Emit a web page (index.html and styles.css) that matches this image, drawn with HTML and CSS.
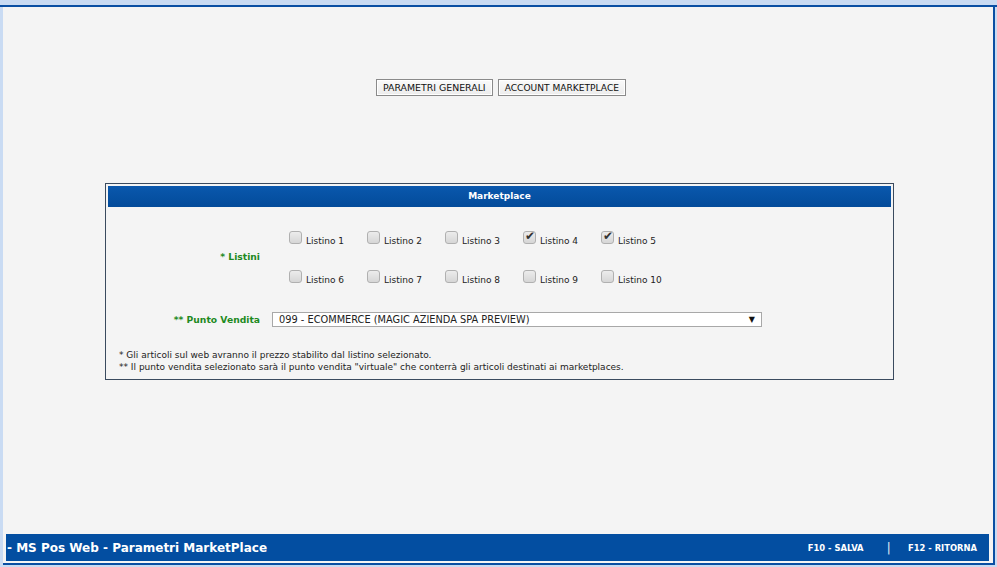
FILE: index.html
```html
<!DOCTYPE html>
<html lang="it">
<head>
    <meta charset="UTF-8">
    <title>MS Pos Web - Parametri MarketPlace</title>
    <link rel="stylesheet" href="styles.css">
</head>
<body>
    <div class="topbar"></div>
    <div class="frame">
        <div class="tabs">
            <button class="btn" type="button">PARAMETRI GENERALI</button>
            <button class="btn" type="button">ACCOUNT MARKETPLACE</button>
        </div>

        <div class="panel">
            <div class="panel-head">Marketplace</div>
            <div class="panel-body">
                <div class="row row-listini">
                    <div class="label">* Listini</div>
                    <div class="checks">
                        <label class="chk"><span class="box"></span>Listino 1</label>
                        <label class="chk"><span class="box"></span>Listino 2</label>
                        <label class="chk"><span class="box"></span>Listino 3</label>
                        <label class="chk"><span class="box on"></span>Listino 4</label>
                        <label class="chk"><span class="box on"></span>Listino 5</label>
                        <label class="chk"><span class="box"></span>Listino 6</label>
                        <label class="chk"><span class="box"></span>Listino 7</label>
                        <label class="chk"><span class="box"></span>Listino 8</label>
                        <label class="chk"><span class="box"></span>Listino 9</label>
                        <label class="chk"><span class="box"></span>Listino 10</label>
                    </div>
                </div>

                <div class="row row-pv">
                    <div class="label">** Punto Vendita</div>
                    <div class="select">
                        <span>099 - ECOMMERCE (MAGIC AZIENDA SPA PREVIEW)</span>
                        <span class="arrow">&#9660;</span>
                    </div>
                </div>

                <div class="notes">
                    <div>* Gli articoli sul web avranno il prezzo stabilito dal listino selezionato.</div>
                    <div>** Il punto vendita selezionato sarà il punto vendita "virtuale" che conterrà gli articoli destinati ai marketplaces.</div>
                </div>
            </div>
        </div>

        <div class="footer">
            <span class="title">- MS Pos Web - Parametri MarketPlace</span>
            <div class="keys">
                <span>F10 - SALVA</span>
                <span class="sep">|</span>
                <span>F12 - RITORNA</span>
            </div>
        </div>
    </div>
</body>
</html>
```

FILE: styles.css
```css
html, body {
    margin: 0;
    height: 567px;
    overflow: hidden;
}

body {
    background-color: #c9dbf3;
    font-family: "DejaVu Sans", Verdana, sans-serif;
    font-size: 10px;
    color: #222;
}

.topbar {
    height: 5px;
    border-bottom: 2px solid #0a4fa3;
}

.frame {
    margin-left: 3px;
    width: 992px;
    height: 558px;
    box-sizing: border-box;
    padding: 0 4px 2px 3px;
    background-color: #f4f4f4;
    border-right: 2px solid #0a4fa3;
    border-bottom: 2px solid #0a4fa3;
    display: flex;
    flex-direction: column;
}

.tabs {
    display: flex;
    justify-content: center;
    gap: 5px;
    margin-top: 72px;
    margin-left: 7px;
}

.btn {
    height: 17px;
    padding: 0 6px;
    font-family: "DejaVu Sans", Verdana, sans-serif;
    font-size: 9.4px;
    color: #111;
    background: linear-gradient(#fafafa, #ececec);
    border: 1px solid #8a8a8a;
    box-shadow: inset 0 0 0 1px #fff;
    border-radius: 0;
}

.btn + .btn {
    font-size: 9.1px;
}

.panel {
    margin: 87px 0 0 99px;
    width: 789px;
    height: 197px;
    box-sizing: border-box;
    border: 1px solid #3a4a5e;
    padding: 2px;
}

.panel-head {
    height: 21px;
    line-height: 21px;
    background: linear-gradient(#0a58ad, #034b9a);
    color: #fff;
    font-weight: bold;
    font-size: 9px;
    text-align: center;
}

.panel-body {
    padding-top: 25px;
}

.row {
    display: flex;
    align-items: center;
}

.label {
    width: 152px;
    text-align: right;
    color: #1e8a1e;
    font-weight: bold;
    font-size: 9.2px;
}

.row-listini .label {
    padding-bottom: 9px;
}

.row-listini .checks {
    margin-left: 29px;
    display: grid;
    grid-template-columns: repeat(5, 78px);
    row-gap: 21px;
}

.chk {
    display: flex;
    align-items: center;
    gap: 4px;
    height: 18px;
    font-size: 9px;
}

.box {
    width: 11px;
    height: 11px;
    border: 1px solid #b0b0b0;
    border-radius: 3px;
    background: linear-gradient(#ececec, #d6d6d6);
    position: relative;
    top: -4px;
    flex: none;
}

.box.on::after {
    content: "\2714";
    position: absolute;
    left: 1px;
    top: -3px;
    font-size: 12px;
    color: #333;
}

.row-pv {
    margin-top: 23px;
}

.select {
    margin-left: 12px;
    width: 490px;
    height: 15px;
    box-sizing: border-box;
    border: 1px solid #a8a8a8;
    background: #fff;
    display: flex;
    justify-content: space-between;
    align-items: center;
    padding: 0 6px 0 6px;
    font-size: 9.8px;
}

.arrow {
    font-size: 8px;
    color: #111;
}

.notes {
    margin: 22px 0 0 11px;
    font-size: 9px;
    line-height: 12px;
    color: #222;
}

.footer {
    margin-top: auto;
    height: 27px;
    background-color: #034ea1;
    color: #fff;
    font-weight: bold;
    display: flex;
    align-items: center;
    justify-content: space-between;
}

.footer .title {
    font-size: 12px;
    padding-left: 1px;
}

.keys {
    display: flex;
    align-items: center;
    font-size: 8.4px;
    padding-right: 12px;
}

.keys .sep {
    font-weight: normal;
    font-size: 13px;
    color: #d8e2f0;
    margin: 0 17px 0 23px;
}
```
